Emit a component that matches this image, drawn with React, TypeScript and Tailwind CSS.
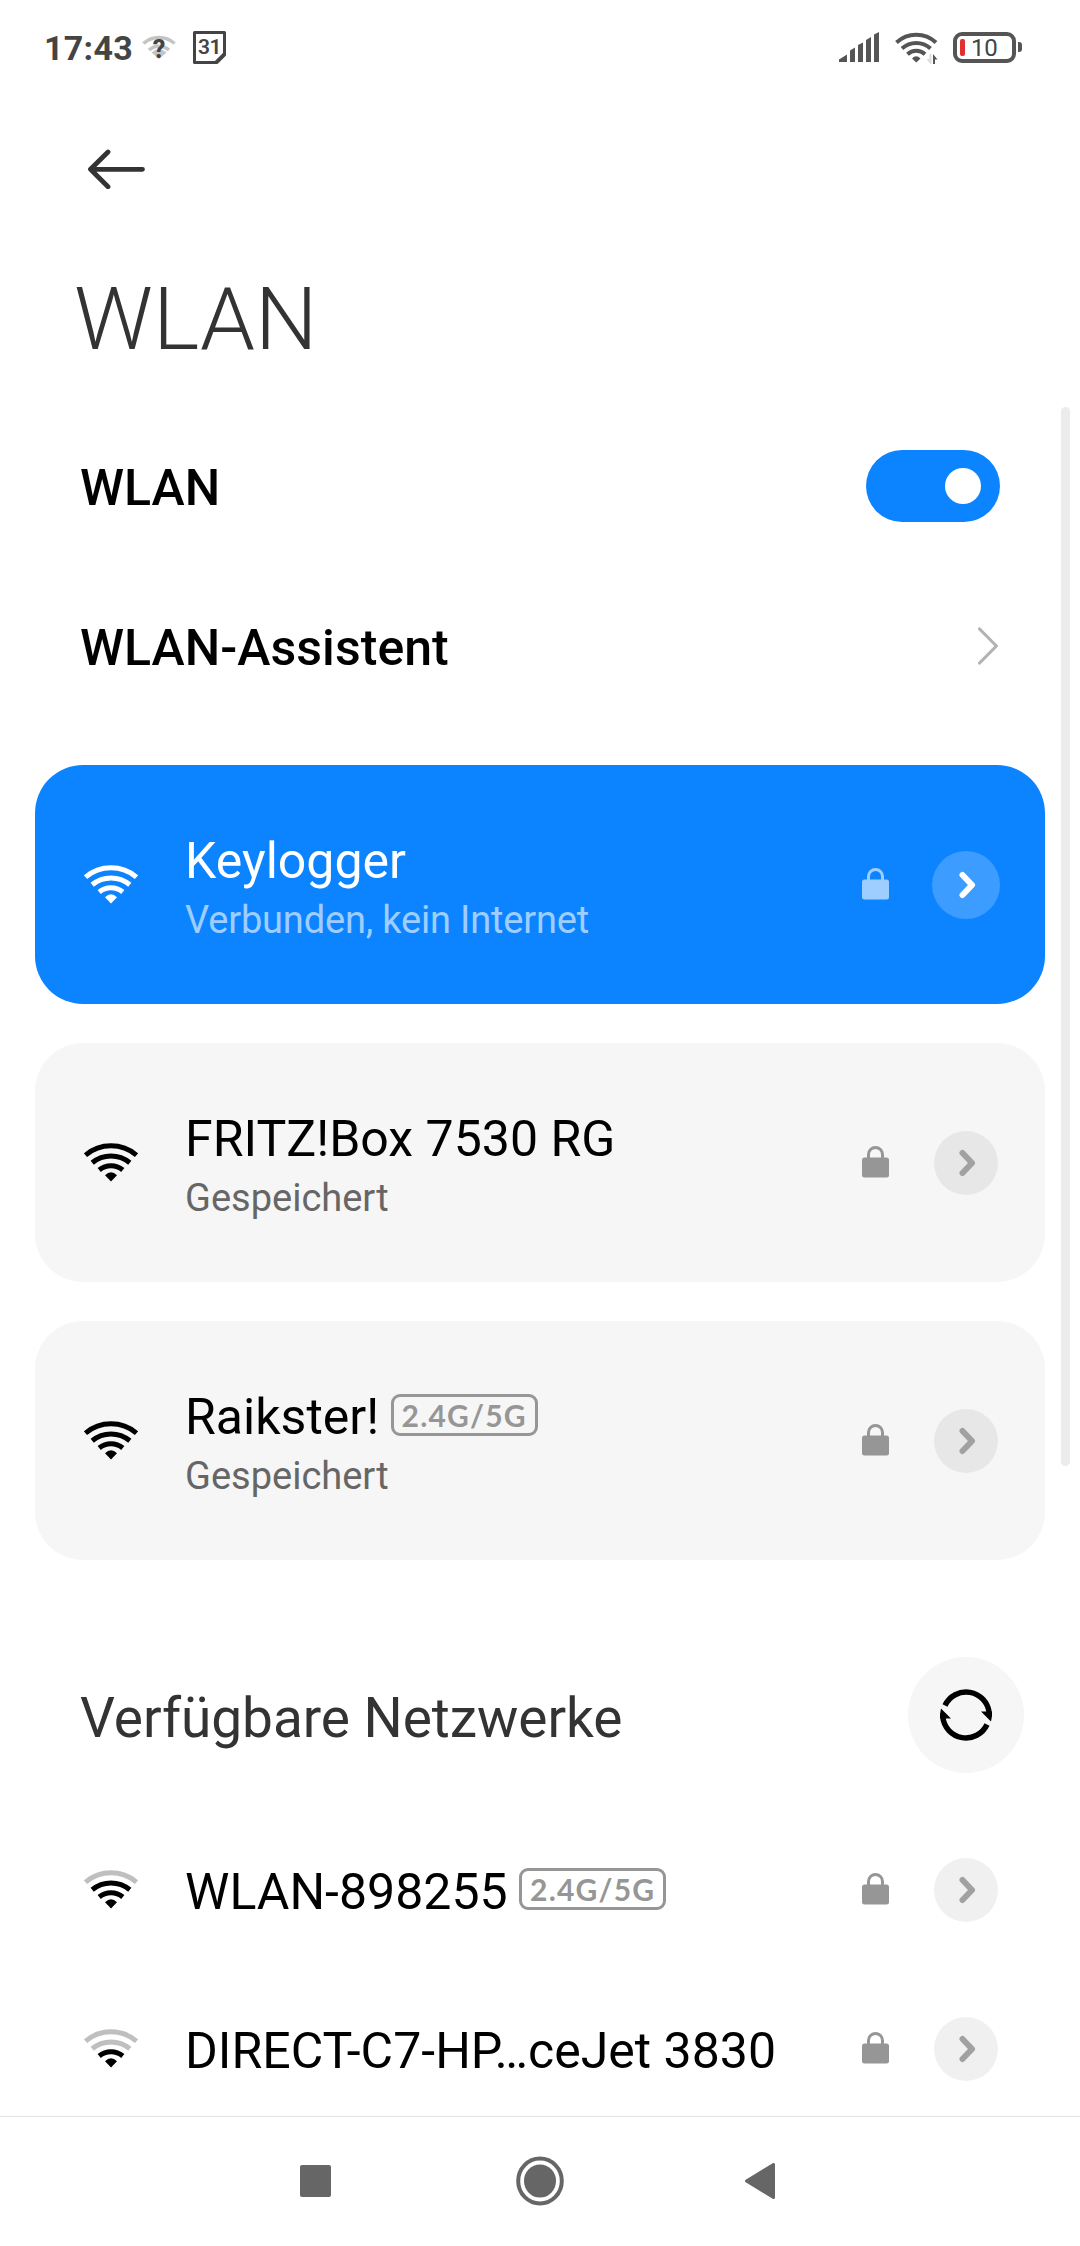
import React from "react";

type WifiProps = { level?: number; className?: string };

function Wifi({ level = 4, className = "text-black" }: WifiProps) {
  return (
    <svg width="54" height="40" viewBox="0 0 54 40" className={"mb-0.5 " + className} fill="none" stroke="currentColor" strokeWidth="5">
      <path d="M21 33.200Q27 27.500 33 33.200L27 39.500Z" fill="currentColor" stroke="none" />
      <path d="M15.200 28A18.500 18.500 0 0 1 38.800 28" opacity={level >= 2 ? 1 : 0.25} />
      <path d="M8.200 20.800A29.500 29.500 0 0 1 45.800 20.800" opacity={level >= 3 ? 1 : 0.25} />
      <path d="M1.500 13.200A39.500 39.500 0 0 1 52.500 13.200" opacity={level >= 4 ? 1 : 0.25} />
    </svg>
  );
}

function Lock({ className }: { className: string }) {
  return (
    <svg width="27" height="33" viewBox="0 0 27 33" className={className}>
      <path d="M6.500 14V8.500a7 7 0 0 1 14 0V14" fill="none" stroke="currentColor" strokeWidth="3" />
      <rect x="0" y="11.500" width="27" height="20" rx="2.500" fill="currentColor" />
    </svg>
  );
}

function More({ active = false }: { active?: boolean }) {
  return (
    <div
      className={
        active
          ? "flex size-[68px] items-center justify-center rounded-full bg-[#3d9cff] text-white"
          : "mx-0.5 flex size-16 items-center justify-center rounded-full bg-black/6 text-[#a1a1a1]"
      }
    >
      <svg width="18" height="28" viewBox="0 0 18 28" className="ml-px" fill="none" stroke="currentColor" strokeWidth="6" strokeLinecap="round" strokeLinejoin="round">
        <path d="M4.500 4L14 14L4.500 24" />
      </svg>
    </div>
  );
}

type NetworkProps = { name: string; sub?: string; dual?: boolean; level?: number; active?: boolean };

function Network({ name, sub, dual, level, active }: NetworkProps) {
  return (
    <>
      <Wifi level={level} className={active ? "text-white" : "text-black"} />
      <div className={sub ? "ml-[47px] flex flex-1 flex-col pt-[13px]" : "ml-[47px] flex flex-1 flex-col pt-[5px]"}>
        <div className={active ? "flex items-center text-white" : "flex items-center text-black"}>
          <span className="text-[50px] leading-[59px] tracking-[0.020px] whitespace-nowrap">{name}</span>
          {dual && (
            <span className="mb-[6px] ml-[11.500px] flex h-[42px] w-[147px] items-center justify-center rounded-[9px] border-3 border-[#969696] font-[Lato] text-[30px] leading-none font-bold tracking-[1.200px] text-[#969696]">
              2.4G/5G
            </span>
          )}
        </div>
        {sub && (
          <span
            className={
              active
                ? "text-[38px] leading-[59px] tracking-[-0.170px] text-[#9dceff]"
                : "text-[38px] leading-[59px] text-[#666]"
            }
          >
            {sub}
          </span>
        )}
      </div>
      <Lock className={active ? "mr-[43px] text-[#9dceff]" : "mr-[43px] text-[#969696]"} />
      <More active={active} />
    </>
  );
}

function StatusBar() {
  return (
    <header className="flex h-[95px] items-center pr-[58px] pl-[44px] text-[#444]">
      <span className="w-[89px] text-[34px] leading-none font-bold tracking-[0.300px]">17:43</span>
      <div className="relative ml-[9px] h-[30px] w-[34px]">
        <svg width="34" height="30" viewBox="0 0 34 30" fill="none" stroke="#c4c4c4" strokeWidth="3.600">
          <path d="M1.500 10.500A23 23 0 0 1 32.500 10.500M7 17A15 15 0 0 1 27 17" />
          <path d="M9.500 19.500Q17 13 24.500 19.500L17 26Z" fill="#c4c4c4" stroke="none" />
        </svg>
        <span className="absolute inset-x-0 top-1 text-center text-[25px] leading-[26px] font-extrabold">?</span>
      </div>
      <div className="relative ml-[17px] size-[33px]">
        <svg width="33" height="33" viewBox="0 0 33 33" fill="none" stroke="#444" strokeWidth="3" strokeLinejoin="round">
          <path d="M1.500 1.500H31.500V24L24 31.500H1.500Z" />
          <path d="M31 23L23 31" />
        </svg>
        <span className="absolute inset-x-0 top-[6px] text-center text-[21px] leading-5 font-semibold tracking-[-0.500px]">31</span>
      </div>
      <div className="flex-1" />
      <svg width="41" height="30" viewBox="0 0 41 30" className="mb-0.5" fill="#555">
        <path d="M0 30V27.500L8 22.500V30ZM11 30V18.500L16 15.500V30ZM19 30V13L24 10.500V30ZM27 30V8L32 5V30ZM35 30V2.500L40 0V30Z" />
      </svg>
      <svg width="44" height="34" viewBox="0 0 44 34" className="ml-[15px]" fill="none" stroke="#555" strokeWidth="4">
        <path d="M1.500 11.500A29 29 0 0 1 41 11.500M7 17.500A21 21 0 0 1 35.500 17.500M12.500 23.200A13 13 0 0 1 30 23.200" />
        <path d="M17 27.500Q21.300 23 25.500 27.500L21.300 31.500Z" fill="#555" stroke="none" />
        <path d="M36.500 23V33H35.500L31.500 28H34.500V23Z" fill="#ddd" stroke="none" />
        <path d="M38 33V23L42.500 28.500H40V33Z" fill="#555" stroke="none" />
      </svg>
      <div className="mb-px ml-[14px] flex h-[31px] w-[63px] items-center rounded-[9px] border-4 border-[#555] pl-[3px]">
        <div className="h-[17px] w-[5px] rounded-[2px] bg-[#e0312f]" />
        <span className="ml-[6px] pt-0.5 text-[24px] leading-none tracking-[-0.300px]">10</span>
      </div>
      <div className="mb-px ml-[2px] h-[10px] w-1 rounded-r-[3px] bg-[#555]" />
    </header>
  );
}

export default function App() {
  return (
    <div className="relative flex h-[2246px] w-[1080px] flex-col overflow-hidden bg-white font-[Roboto,sans-serif] text-black">
      <StatusBar />
      <div className="flex h-[149px] pt-[54px] pl-[87px]">
        <svg width="58" height="40" viewBox="0 0 58 40" fill="none" stroke="#333" strokeWidth="4.800" strokeLinecap="round" strokeLinejoin="round">
          <path d="M55.500 20.300H3.500M21 3L3.500 20.300L21 37.700" />
        </svg>
      </div>
      <h1 className="h-[162px] pt-[23px] pl-[74px] text-[88px] leading-[104px] font-light text-[#333]">WLAN</h1>
      <div className="flex h-[160px] items-center justify-between pr-20 pl-20">
        <span className="pt-1 text-[50px] font-medium">WLAN</span>
        <div className="flex h-[72px] w-[134px] items-center justify-end rounded-full bg-[#0d84ff] pr-[19px]">
          <div className="size-9 rounded-full bg-white" />
        </div>
      </div>
      <div className="flex h-[160px] items-center justify-between pr-[82px] pl-20">
        <span className="pt-1 text-[50px] font-medium tracking-[0.050px]">WLAN-Assistent</span>
        <svg width="20" height="38" viewBox="0 0 20 38" fill="none" stroke="#b3b3b3" strokeWidth="3.200" strokeLinecap="round" strokeLinejoin="round">
          <path d="M1.600 2L18.400 19L1.600 36" />
        </svg>
      </div>
      <div className="mx-[35px] mt-[39px] flex flex-col gap-[39px]">
        <div className="flex h-[239px] items-center rounded-[48px] bg-[#0d84ff] pr-[45px] pl-[49px]">
          <Network name="Keylogger" sub="Verbunden, kein Internet" active />
        </div>
        <div className="flex h-[239px] items-center rounded-[48px] bg-[#f6f6f6] pr-[45px] pl-[49px]">
          <Network name="FRITZ!Box 7530 RG" sub="Gespeichert" />
        </div>
        <div className="flex h-[239px] items-center rounded-[48px] bg-[#f6f6f6] pr-[45px] pl-[49px]">
          <Network name="Raikster!" sub="Gespeichert" dual />
        </div>
      </div>
      <div className="mt-[97px] flex h-[116px] items-center justify-between pr-14 pl-20">
        <h2 className="pt-[7px] text-[55px] leading-none tracking-[-0.050px] text-[#333]">Verfügbare Netzwerke</h2>
        <div className="flex size-[116px] items-center justify-center rounded-full bg-[#f6f6f6]">
          <svg width="52" height="52" viewBox="0 0 52 52" fill="none" stroke="#000" strokeWidth="5.500">
            <path d="M5 16.500A23.250 23.250 0 0 1 49.200 24M47 35.500A23.250 23.250 0 0 1 2.800 28" />
            <path d="M41 22.500H52V27L51 32.500ZM11 29.500H0V25L1 19.500Z" fill="#000" stroke="none" />
          </svg>
        </div>
      </div>
      <div className="mt-[37px] h-[306px] overflow-hidden">
        <div className="flex h-[159px] items-center pr-20 pl-[84px]">
          <Network name="WLAN-898255" level={3} dual />
        </div>
        <div className="flex h-[159px] items-center pr-20 pl-[84px]">
          <Network name="DIRECT-C7-HP…ceJet 3830" level={2} />
        </div>
      </div>
      <nav className="flex h-[130px] items-center border-t border-[#e3e3e3] pb-px pl-[300px]">
        <div className="h-8 w-[31px] rounded-[2px] bg-[#666]" />
        <svg width="50" height="50" viewBox="0 0 50 50" className="ml-[184px]">
          <ellipse cx="25" cy="25" rx="21.800" ry="22.500" fill="none" stroke="#666" strokeWidth="4" />
          <ellipse cx="25" cy="25" rx="16" ry="16.500" fill="#666" />
        </svg>
        <svg width="30" height="36" viewBox="0 0 30 36" className="ml-[180px]" fill="#666" stroke="#666" strokeWidth="3" strokeLinejoin="round">
          <path d="M28.500 1.500V34.500L1.500 18Z" />
        </svg>
      </nav>
      <div className="absolute top-[407px] left-[1061px] h-[1059px] w-[9px] rounded-full bg-[#ececec]" />
    </div>
  );
}
